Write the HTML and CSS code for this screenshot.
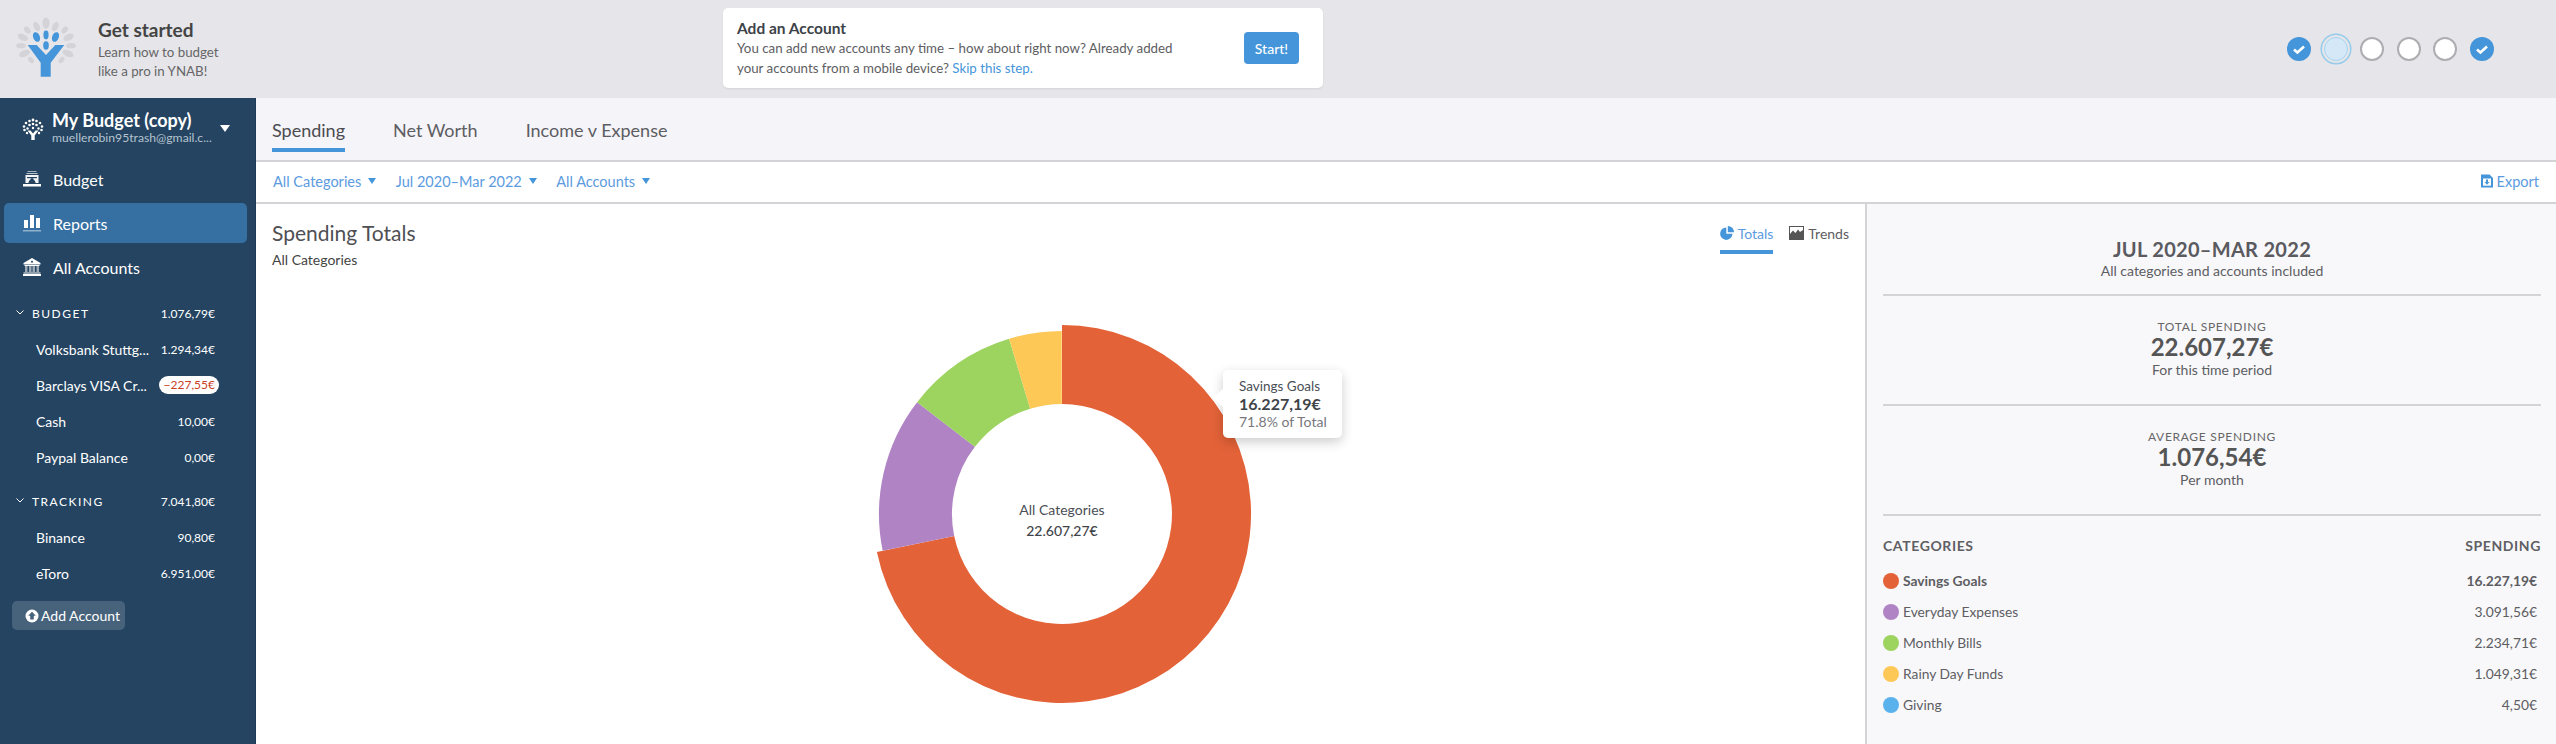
FILE: index.html
```html
<!DOCTYPE html>
<html lang="en">
<head>
<meta charset="utf-8">
<title>YNAB Reports</title>
<link rel="stylesheet" href="styles.css">
</head>
<body>
<div class="app">
  <header class="banner">
    <div class="intro">
      <svg class="logo" viewBox="16 17 60 60" width="60" height="60">
        <g fill="#d4d4d8">
          <ellipse cx="46" cy="23" rx="3.6" ry="5.6"/>
          <ellipse cx="36.7" cy="26.5" rx="3" ry="5" transform="rotate(-25 36.7 26.5)"/>
          <ellipse cx="55.3" cy="26.5" rx="3" ry="5" transform="rotate(25 55.3 26.5)"/>
          <ellipse cx="27.3" cy="30" rx="2.6" ry="4" transform="rotate(-40 27.3 30)"/>
          <ellipse cx="64.7" cy="30" rx="2.6" ry="4" transform="rotate(40 64.7 30)"/>
          <ellipse cx="23" cy="37.3" rx="5.5" ry="3.2" transform="rotate(25 23 37.3)"/>
          <ellipse cx="68.5" cy="37.3" rx="5.5" ry="3.2" transform="rotate(-25 68.5 37.3)"/>
          <ellipse cx="21" cy="45.7" rx="4.8" ry="2.6"/>
          <ellipse cx="71" cy="45.7" rx="4.8" ry="2.6"/>
          <ellipse cx="24.5" cy="53.5" rx="5.8" ry="3.2" transform="rotate(-22 24.5 53.5)"/>
          <ellipse cx="68" cy="53.5" rx="5.8" ry="3.2" transform="rotate(22 68 53.5)"/>
          <ellipse cx="31" cy="60" rx="2.4" ry="3.6" transform="rotate(-40 31 60)"/>
          <ellipse cx="61.5" cy="60" rx="2.4" ry="3.6" transform="rotate(40 61.5 60)"/>
        </g>
        <g fill="#4495d9">
          <ellipse cx="46" cy="35" rx="2.6" ry="4.4"/>
          <ellipse cx="46" cy="45.5" rx="2.8" ry="4.2"/>
          <ellipse cx="36.5" cy="37" rx="3.3" ry="5" transform="rotate(-22 36.5 37)"/>
          <ellipse cx="55.5" cy="37" rx="3.3" ry="5" transform="rotate(22 55.5 37)"/>
          <path d="M27.7 45H36.7L46 55L55.3 45H64.3L50.7 62.7V76.7H40.7V62.7Z"/>
        </g>
      </svg>
      <div class="intro-text">
        <div class="intro-title">Get started</div>
        <div class="intro-sub">Learn how to budget<br>like a pro in YNAB!</div>
      </div>
    </div>
    <div class="card">
      <div class="card-text">
        <div class="card-title">Add an Account</div>
        <div class="card-body">You can add new accounts any time – how about right now? Already added<br>your accounts from a mobile device? <a class="link">Skip this step.</a></div>
      </div>
      <button class="start">Start!</button>
    </div>
    <div class="steps">
      <span class="step done"><svg viewBox="0 0 24 24" width="24" height="24"><path d="M7 12.5l3.4 3L17 9.5" fill="none" stroke="#fff" stroke-width="2.6"/></svg></span>
      <span class="step current"></span>
      <span class="step"></span>
      <span class="step"></span>
      <span class="step"></span>
      <span class="step done"><svg viewBox="0 0 24 24" width="24" height="24"><path d="M7 12.5l3.4 3L17 9.5" fill="none" stroke="#fff" stroke-width="2.6"/></svg></span>
    </div>
  </header>

  <div class="workspace">
    <aside class="sidebar">
      <div class="budget-head">
        <svg class="tree" viewBox="0 0 22 22" width="22" height="22">
          <g fill="#fff">
            <circle cx="11" cy="2" r="1.4"/><circle cx="7.5" cy="3" r="1.3"/><circle cx="14.5" cy="3" r="1.3"/>
            <circle cx="4" cy="5" r="1.3"/><circle cx="18" cy="5" r="1.3"/><circle cx="2" cy="8.5" r="1.3"/><circle cx="20" cy="8.5" r="1.3"/>
            <circle cx="2.5" cy="12" r="1.3"/><circle cx="19.5" cy="12" r="1.3"/><circle cx="5" cy="15" r="1.2"/><circle cx="17" cy="15" r="1.2"/>
            <circle cx="11" cy="6" r="1.3"/><circle cx="7.5" cy="7" r="1.3"/><circle cx="14.5" cy="7" r="1.3"/>
            <circle cx="5.5" cy="10.5" r="1.2"/><circle cx="16.5" cy="10.5" r="1.2"/><circle cx="11" cy="10" r="1.2"/>
            <path d="M5.5 12.5H8.5L11 15.5L13.500 12.5H16.500L12.700 17.500V22H9.300V17.500Z"/>
          </g>
        </svg>
        <div class="budget-names">
          <div class="budget-name">My Budget (copy)</div>
          <div class="budget-mail">muellerobin95trash@gmail.c...</div>
        </div>
        <span class="caret-white"></span>
      </div>
      <nav class="nav">
        <a class="nav-item">
          <svg viewBox="0 0 18 18" width="18" height="18" class="nav-icon"><g fill="#fff"><rect x="4.500" y="1" width="9" height="1" opacity=".6"/><rect x="3.500" y="3" width="11" height="1" opacity=".7"/><path d="M2.500 5H15.500V13H12.500A3.500 3.500 0 0 0 5.500 13H2.500Z" opacity=".95"/><rect x="0" y="14" width="18" height="2.500"/></g><circle cx="9" cy="9.500" r="1.600" fill="#244461"/><path d="M4 7h10v1.200H4z" fill="#244461"/></svg>
          Budget
        </a>
        <a class="nav-item active">
          <svg viewBox="0 0 18 18" width="18" height="18" class="nav-icon"><g fill="#fff"><rect x="1" y="6" width="4" height="8"/><rect x="7" y="1" width="4" height="13"/><rect x="13" y="4" width="4" height="10"/></g><rect x="0" y="16" width="18" height="1.500" fill="#fff" opacity=".45"/></svg>
          Reports
        </a>
        <a class="nav-item">
          <svg viewBox="0 0 18 18" width="18" height="18" class="nav-icon"><g fill="#fff"><path d="M9 0L17.500 5V6.500H.5V5Z"/><rect x="1.500" y="7" width="15" height="1"/><rect x="2" y="8" width="2.500" height="6" opacity=".55"/><rect x="6" y="8" width="2.500" height="6" opacity=".55"/><rect x="9.500" y="8" width="2.500" height="6" opacity=".55"/><rect x="13.500" y="8" width="2.500" height="6" opacity=".55"/><rect x=".5" y="14.500" width="17" height="1"/><rect x="0" y="16" width="18" height="2"/></g><circle cx="9" cy="3.800" r="1" fill="#244461"/></svg>
          All Accounts
        </a>
      </nav>
      <section class="group">
        <div class="group-head"><svg class="chev" viewBox="0 0 8 5" width="8" height="5"><path d="M.5.5L4 4L7.500.5" fill="none" stroke="#fff" stroke-width="1"/></svg><span class="group-label">BUDGET</span><span class="amt">1.076,79€</span></div>
        <div class="acct"><span class="acct-name">Volksbank Stuttg...</span><span class="amt">1.294,34€</span></div>
        <div class="acct"><span class="acct-name">Barclays VISA Cr...</span><span class="amt neg">−227,55€</span></div>
        <div class="acct"><span class="acct-name">Cash</span><span class="amt">10,00€</span></div>
        <div class="acct"><span class="acct-name">Paypal Balance</span><span class="amt">0,00€</span></div>
      </section>
      <section class="group">
        <div class="group-head"><svg class="chev" viewBox="0 0 8 5" width="8" height="5"><path d="M.5.5L4 4L7.500.5" fill="none" stroke="#fff" stroke-width="1"/></svg><span class="group-label">TRACKING</span><span class="amt">7.041,80€</span></div>
        <div class="acct"><span class="acct-name">Binance</span><span class="amt">90,80€</span></div>
        <div class="acct"><span class="acct-name">eToro</span><span class="amt">6.951,00€</span></div>
      </section>
      <button class="add-account">
        <svg viewBox="0 0 14 14" width="14" height="14"><circle cx="7" cy="7" r="6.500" fill="#fff"/><path d="M7 2.800L10.800 6.800H8.800V10.500H5.200V6.800H3.200Z" fill="#47637c"/></svg>
        <span>Add Account</span>
      </button>
    </aside>

    <main class="content">
      <div class="tabs">
        <a class="tab selected">Spending</a>
        <a class="tab">Net Worth</a>
        <a class="tab">Income v Expense</a>
      </div>
      <div class="filters">
        <a class="filter">All Categories<span class="caret"></span></a>
        <a class="filter">Jul 2020–Mar 2022<span class="caret"></span></a>
        <a class="filter">All Accounts<span class="caret"></span></a>
        <a class="export">
          <svg viewBox="0 0 14 14" width="14" height="14"><path d="M1 .5H9.500L13 4V13.500H1Z" fill="#4495d9"/><rect x="3" y="4.500" width="8" height="7.200" fill="#fff"/><path d="M6 5.500H8V8H9.500L7 10.800L4.500 8H6Z" fill="#4495d9"/></svg>
          Export
        </a>
      </div>
      <div class="report">
        <div class="chart-pane">
          <div class="chart-head">
            <div>
              <h1 class="chart-title">Spending Totals</h1>
              <div class="chart-sub">All Categories</div>
            </div>
            <div class="views">
              <a class="view selected">
                <svg viewBox="0 0 14 14" width="14" height="14"><path d="M6.300 1.500A6.200 6.200 0 1 0 12.500 7.700H6.300Z" fill="#4495d9"/><path d="M7.800 0A6.200 6.200 0 0 1 14 6.200H7.800Z" fill="#4495d9"/></svg>
                Totals
              </a>
              <a class="view">
                <svg viewBox="0 0 15 14" width="15" height="14"><rect x=".5" y=".5" width="14" height="13" fill="#fff" stroke="#555"/><path d="M1 13V8L4 4.500L6.500 7L9 3.500L11 6L14 4V13Z" fill="#555"/></svg>
                Trends
              </a>
            </div>
          </div>
          <div class="donut-wrap">
            <svg class="donut" viewBox="0 0 400 400" width="400" height="400">
              <path d="M200 11A189 189 0 1 1 14.900 238L92.200 222.100A110 110 0 1 0 200 90Z" fill="#e36238"/>
              <path d="M20.700 236.800A183 183 0 0 1 55.100 88.200L112.900 132.800A110 110 0 0 0 92.200 222.100Z" fill="#b084c4"/>
              <path d="M55.100 88.200A183 183 0 0 1 147.100 24.800L168.200 94.700A110 110 0 0 0 112.900 132.800Z" fill="#9dd35f"/>
              <path d="M147.100 24.800A183 183 0 0 1 199.700 17L199.800 90A110 110 0 0 0 168.200 94.700Z" fill="#fec857"/>
            </svg>
            <div class="donut-label">
              <div>All Categories</div>
              <div class="donut-total">22.607,27€</div>
            </div>
            <div class="tip">
              <div class="tip-name">Savings Goals</div>
              <div class="tip-value">16.227,19€</div>
              <div class="tip-share">71.8% of Total</div>
            </div>
          </div>
        </div>
        <aside class="summary">
          <div class="sum-block first">
            <div class="period">JUL 2020–MAR 2022</div>
            <div class="sum-note">All categories and accounts included</div>
          </div>
          <div class="sum-block">
            <div class="sum-cap">TOTAL SPENDING</div>
            <div class="sum-big">22.607,27€</div>
            <div class="sum-note">For this time period</div>
          </div>
          <div class="sum-block">
            <div class="sum-cap">AVERAGE SPENDING</div>
            <div class="sum-big">1.076,54€</div>
            <div class="sum-note">Per month</div>
          </div>
          <div class="legend-head"><span>CATEGORIES</span><span>SPENDING</span></div>
          <div class="legend-row strong"><span class="dot d-orange"></span><span class="legend-name">Savings Goals</span><span class="legend-amt">16.227,19€</span></div>
          <div class="legend-row"><span class="dot d-purple"></span><span class="legend-name">Everyday Expenses</span><span class="legend-amt">3.091,56€</span></div>
          <div class="legend-row"><span class="dot d-green"></span><span class="legend-name">Monthly Bills</span><span class="legend-amt">2.234,71€</span></div>
          <div class="legend-row"><span class="dot d-yellow"></span><span class="legend-name">Rainy Day Funds</span><span class="legend-amt">1.049,31€</span></div>
          <div class="legend-row"><span class="dot d-blue"></span><span class="legend-name">Giving</span><span class="legend-amt">4,50€</span></div>
        </aside>
      </div>
    </main>
  </div>
</div>
</body>
</html>
```
FILE: styles.css
```css
* { box-sizing: border-box; }
html, body { margin: 0; height: 100%; }
body { font-family: Lato, "Open Sans", sans-serif; font-size: 14px; color: #555; overflow: hidden; background: #fff; }
a { cursor: pointer; }
.app { width: 2556px; height: 744px; display: flex; flex-direction: column; overflow: hidden; }

/* banner */
.banner { height: 98px; flex: none; background: #e5e5ea; display: flex; align-items: flex-start; }
.intro { width: 723px; padding: 17px 0 0 16px; display: flex; gap: 22px; }
.logo { flex: none; }
.intro-title { font-size: 19px; font-weight: 700; line-height: 22px; color: #444; margin-top: 2px; }
.intro-sub { font-size: 13.300px; line-height: 19px; color: #666; margin-top: 2px; }
.card { width: 600px; height: 80px; margin-top: 8px; background: #fff; border-radius: 5px; padding: 0 24px 0 14px; display: flex; align-items: center; justify-content: space-between; box-shadow: 0 1px 2px rgba(0,0,0,.08); }
.card-title { font-size: 15.500px; font-weight: 700; line-height: 20px; color: #3d4248; }
.card-body { font-size: 13.300px; line-height: 20px; color: #5d5d62; }
.link { color: #4495d9; }
.start { width: 55px; height: 32px; border: 0; border-radius: 4px; background: #4495d9; color: #fff; font: 500 14px Lato, sans-serif; padding: 0; }
.steps { margin-left: 964px; margin-top: 37px; display: flex; align-items: center; gap: 12.600px; }
.step { width: 24px; height: 24px; border-radius: 50%; background: #fff; border: 2px solid #adadb2; display: block; }
.step.done { background: #4495d9; border: 0; }
.step.done svg { display: block; }
.step.current { background: #d4e8f7; border: 1.500px solid #a5d4f0; box-shadow: 0 0 0 2px #e5e5ea, 0 0 0 3.500px #93cbeb; }

/* layout */
.workspace { flex: 1; display: flex; min-height: 0; }
.sidebar { width: 256px; flex: none; background: #244461; color: #fff; display: flex; flex-direction: column; border-right: 1px solid #1e3a54; }
.budget-head { height: 64px; padding: 11px 0 0 22px; display: flex; align-items: flex-start; }
.tree { flex: none; margin-top: 9px; }
.budget-names { width: 167px; margin-left: 8px; }
.budget-name { font-size: 18px; font-weight: 700; line-height: 22px; white-space: nowrap; }
.budget-mail { font-size: 12.200px; line-height: 14px; color: #b5c3cf; white-space: nowrap; }
.caret-white { width: 0; height: 0; border-left: 5.500px solid transparent; border-right: 5.500px solid transparent; border-top: 7px solid #fff; margin-left: 1px; margin-top: 16px; }
.nav { padding: 0 8px 0 4px; margin-top: -3px; display: flex; flex-direction: column; gap: 4px; }
.nav-item { height: 40px; border-radius: 5px; display: flex; align-items: center; gap: 12px; padding-left: 19px; font-size: 16px; color: #fff; }
.nav-item.active { background: #3670a3; }
.nav-icon { flex: none; }
.group { margin-top: 8px; padding: 0 0 0 16px; }
.group + .group { margin-top: 8px; }
.group-head { height: 36px; display: flex; align-items: center; padding-right: 40px; }
.chev { flex: none; margin-right: 8px; margin-top: -2px; }
.group-label { font-size: 12px; letter-spacing: 1.500px; flex: 1; }
.amt { font-size: 12px; white-space: nowrap; margin-left: auto; }
.acct { height: 36px; display: flex; align-items: center; padding: 0 40px 0 20px; font-size: 14px; }
.acct-name { white-space: nowrap; }
.neg { background: #fff; color: #c9411f; border-radius: 9px; height: 18px; line-height: 18px; padding: 0 4px 0 5px; margin-right: -4px; }
.add-account { margin: 10px 0 0 12px; width: 113px; height: 29px; border: 0; border-radius: 5px; background: #47637c; color: #fff; font: 14px Lato, sans-serif; display: flex; align-items: center; gap: 2px; padding: 0 0 0 13px; white-space: nowrap; }
.add-account svg { flex: none; }

/* content */
.content { flex: 1; min-width: 0; display: flex; flex-direction: column; }
.tabs { height: 64px; flex: none; background: #f4f4f9; border-bottom: 2px solid #d3d3d8; padding-left: 16px; display: flex; gap: 48px; }
.tab { font-size: 18px; height: 54px; padding-top: 21px; line-height: 22px; color: #5d5d62; border-bottom: 4px solid transparent; white-space: nowrap; }
.tab.selected { border-bottom-color: #4495d9; color: #4b4b50; }
.filters { height: 42px; flex: none; border-bottom: 2px solid #d3d3d8; padding: 0 17px 2px 17px; display: flex; align-items: center; gap: 19.500px; }
.filter { color: #5b9be0; font-size: 14.500px; display: flex; align-items: center; white-space: nowrap; }
.caret { width: 0; height: 0; border-left: 4.500px solid transparent; border-right: 4.500px solid transparent; border-top: 6px solid #4495d9; margin-left: 7px; }
.export { margin-left: auto; color: #5b9be0; font-size: 14.500px; display: flex; align-items: center; gap: 3px; }

.report { flex: 1; display: flex; min-height: 0; }
.chart-pane { flex: 1; min-width: 0; padding: 0 16px; display: flex; flex-direction: column; }
.chart-head { display: flex; justify-content: space-between; align-items: flex-start; padding-top: 16px; height: 110px; flex: none; }
.chart-title { margin: 0; font-size: 21px; font-weight: 400; line-height: 26px; color: #4f4f54; }
.chart-sub { font-size: 14px; line-height: 18px; margin-top: 5px; color: #444; }
.views { display: flex; gap: 16px; }
.view { display: flex; align-items: center; gap: 4px; height: 34px; padding-bottom: 4px; color: #5d5d62; border-bottom: 4px solid transparent; font-size: 14px; }
.view.selected { color: #5b9be0; border-bottom-color: #4495d9; }
.donut-wrap { position: relative; width: 400px; height: 400px; margin-left: 590px; flex: none; }
.donut { display: block; }
.donut-label { position: absolute; left: 100px; width: 200px; top: 185px; text-align: center; font-size: 14px; line-height: 21px; color: #4b4f55; }
.donut-total { font-weight: 500; color: #3f444a; }
.tip { position: absolute; left: 361px; top: 56px; width: 119px; height: 68px; padding: 8px 16px; background: #fff; border-radius: 5px; box-shadow: 0 4px 12px rgba(0,0,0,.2); z-index: 1; }
.tip::before { content: ""; position: absolute; left: -9px; top: 18px; width: 20px; height: 20px; background: #fff; transform: rotate(45deg) scale(.72); }
.tip-name { position: relative; font-size: 13.500px; line-height: 17px; color: #4b4f55; white-space: nowrap; }
.tip-value { position: relative; font-size: 16px; font-weight: 700; line-height: 18px; color: #3f444a; white-space: nowrap; }
.tip-share { position: relative; font-size: 14px; line-height: 18px; color: #77777c; white-space: nowrap; }

.summary { width: 691px; flex: none; border-left: 2px solid #d3d3d8; background: #f8f8fb; padding: 0 15px 0 16px; }
.sum-block { height: 110px; border-bottom: 2px solid #d3d3d8; text-align: center; padding-top: 23px; }
.sum-block.first { height: 92px; padding-top: 34px; }
.period { font-size: 20px; font-weight: 700; line-height: 23px; letter-spacing: .3px; color: #5a5a5f; }
.sum-note { font-size: 14px; line-height: 20px; color: #5d5d62; }
.sum-cap { font-size: 12px; line-height: 16px; letter-spacing: .7px; color: #666; }
.sum-big { font-size: 24px; font-weight: 700; line-height: 24px; margin-bottom: 1px; color: #555; }
.legend-head { display: flex; justify-content: space-between; font-size: 14px; font-weight: 700; letter-spacing: .6px; color: #5f5f64; height: 29px; padding-top: 20px; box-sizing: content-box; line-height: 20px; }
.legend-row { height: 31px; display: flex; align-items: center; font-size: 13.800px; color: #5d5d62; }
.legend-row.strong { font-weight: 700; }
.dot { width: 16px; height: 16px; border-radius: 50%; flex: none; margin-right: 4px; }
.d-orange { background: #e36238; }
.d-purple { background: #b084c4; }
.d-green { background: #9dd35f; }
.d-yellow { background: #fec857; }
.d-blue { background: #5ab2ec; }
.legend-amt { margin-left: auto; padding-right: 4px; }
```
